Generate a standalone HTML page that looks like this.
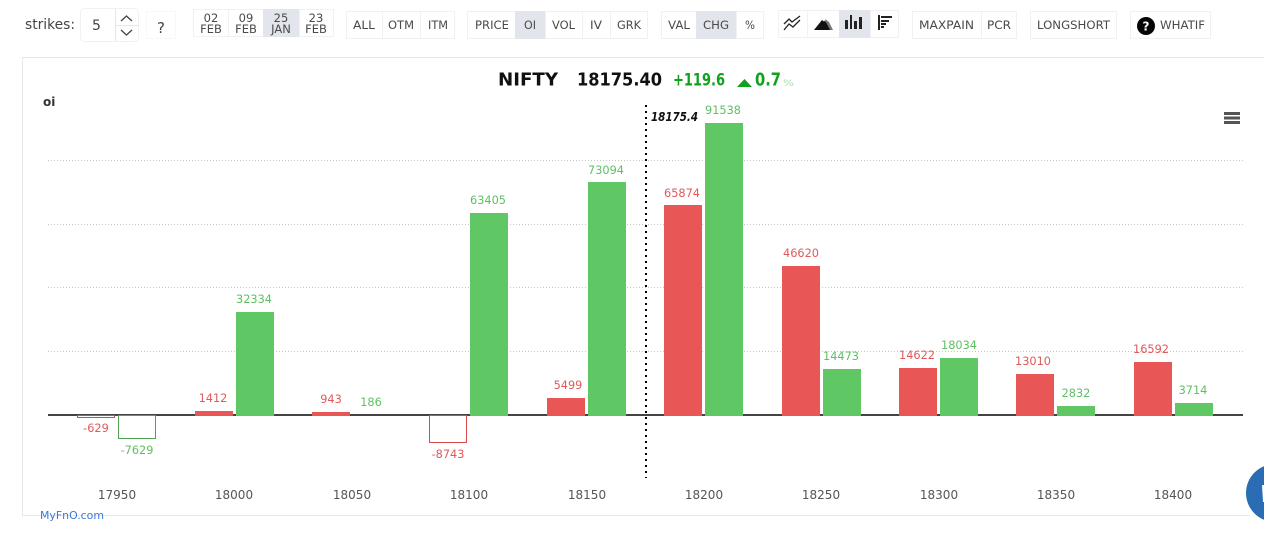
<!DOCTYPE html>
<html><head><meta charset="utf-8"><style>
html,body{margin:0;padding:0;background:#fff;width:1280px;height:537px;overflow:hidden}
svg{position:absolute;left:0;top:0;font-family:"DejaVu Sans","Liberation Sans",sans-serif}
</style></head><body>
<svg width="1264" height="537" viewBox="0 0 1264 537" xmlns="http://www.w3.org/2000/svg">
<rect x="0" y="0" width="1264" height="537" fill="#fff"/>
<!-- toolbar boxes -->
<g fill="#fff" stroke="#f0f1f4" stroke-width="1">
<rect x="80.5" y="8.5" width="58" height="33" rx="4"/>
<rect x="146.5" y="11.5" width="29" height="27" stroke-dasharray="1 1"/>
<rect x="193.5" y="9.5" width="35" height="27"/>
<rect x="228.5" y="9.5" width="35" height="27"/>
<rect x="299.5" y="9.5" width="34" height="27"/>
<rect x="346.5" y="11.5" width="36" height="27"/>
<rect x="382.5" y="11.5" width="38" height="27"/>
<rect x="420.5" y="11.5" width="34" height="27"/>
<rect x="467.5" y="11.5" width="48" height="27"/>
<rect x="545.5" y="11.5" width="37" height="27"/>
<rect x="582.5" y="11.5" width="28" height="27"/>
<rect x="610.5" y="11.5" width="37" height="27"/>
<rect x="661.5" y="11.5" width="35" height="27"/>
<rect x="736.5" y="11.5" width="27" height="27"/>
<rect x="778.5" y="10.5" width="29" height="27"/>
<rect x="807.5" y="10.5" width="32" height="27"/>
<rect x="870.5" y="10.5" width="28" height="27"/>
<rect x="912.5" y="11.5" width="69" height="27"/>
<rect x="981.5" y="11.5" width="35" height="27"/>
<rect x="1030.5" y="11.5" width="86" height="27"/>
<rect x="1130.5" y="11.5" width="80" height="27"/>
</g>
<g fill="#e3e5ec">
<rect x="263" y="9" width="36" height="28"/>
<rect x="515" y="11" width="30" height="28"/>
<rect x="696" y="11" width="40" height="28"/>
<rect x="839" y="10" width="31" height="28"/>
</g>
<path d="M115.5 9V41M115 25.5H139" stroke="#e4e6ea" fill="none"/>
<path d="M121 21l5.500-5 5.500 5" stroke="#444" stroke-width="1.300" fill="none"/>
<path d="M121 30l5.500 5 5.500-5" stroke="#444" stroke-width="1.300" fill="none"/>
<!-- toolbar text -->
<g fill="#444" font-size="14">
<text x="25" y="29" textLength="50" lengthAdjust="spacingAndGlyphs">strikes:</text>
<text x="92" y="30" font-size="14">5</text>
<text x="157" y="33" font-size="15">?</text>
</g>
<g fill="#4a4a4a" font-size="11.500" text-anchor="middle">
<text x="211" y="22">02</text><text x="211" y="33">FEB</text>
<text x="246" y="22">09</text><text x="246" y="33">FEB</text>
<text x="281" y="22">25</text><text x="281" y="33">JAN</text>
<text x="316" y="22">23</text><text x="316" y="33">FEB</text>
</g>
<g fill="#4a4a4a" font-size="11.500">
<text x="353" y="29" textLength="22" lengthAdjust="spacingAndGlyphs">ALL</text>
<text x="388" y="29" textLength="26" lengthAdjust="spacingAndGlyphs">OTM</text>
<text x="428" y="29" textLength="20" lengthAdjust="spacingAndGlyphs">ITM</text>
<text x="475" y="29" textLength="34" lengthAdjust="spacingAndGlyphs">PRICE</text>
<text x="524" y="29" textLength="12" lengthAdjust="spacingAndGlyphs">OI</text>
<text x="552" y="29" textLength="23" lengthAdjust="spacingAndGlyphs">VOL</text>
<text x="590" y="29" textLength="12" lengthAdjust="spacingAndGlyphs">IV</text>
<text x="617" y="29" textLength="24" lengthAdjust="spacingAndGlyphs">GRK</text>
<text x="668" y="29" textLength="22" lengthAdjust="spacingAndGlyphs">VAL</text>
<text x="703" y="29" textLength="26" lengthAdjust="spacingAndGlyphs">CHG</text>
<text x="745" y="29" textLength="10" lengthAdjust="spacingAndGlyphs">%</text>
<text x="919" y="29" textLength="55" lengthAdjust="spacingAndGlyphs">MAXPAIN</text>
<text x="987" y="29" textLength="24" lengthAdjust="spacingAndGlyphs">PCR</text>
<text x="1037" y="29" textLength="73" lengthAdjust="spacingAndGlyphs">LONGSHORT</text>
<text x="1160" y="29" textLength="45" lengthAdjust="spacingAndGlyphs">WHATIF</text>
</g>
<!-- help icon -->
<circle cx="1146" cy="26" r="9" fill="#050505"/>
<text x="1146" y="30.500" fill="#fff" font-size="12" font-weight="bold" text-anchor="middle">?</text>
<!-- chart-type icons -->
<g fill="none" stroke="#222" stroke-width="1.300">
<path d="M784 24l5-5 3 3 8-6"/>
<path d="M784 30l5-6 4 3 7-7"/>
</g>
<path d="M814 30l8-10 2 1.500 1-1 6 9.500z" fill="#111"/>
<path d="M825 19l4 3 4 8h-3l-4-8z" fill="#777"/>
<g fill="#222">
<rect x="845" y="20" width="3" height="9"/>
<rect x="850" y="15" width="2" height="14"/>
<rect x="854" y="21" width="3" height="8"/>
<rect x="859" y="17" width="3" height="12"/>
</g>
<g fill="#222">
<rect x="878" y="15" width="2" height="15"/>
<rect x="881" y="16" width="11" height="2"/>
<rect x="881" y="20" width="8" height="2"/>
<rect x="881" y="23" width="5" height="2"/>
<rect x="881" y="26" width="3" height="2"/>
</g>
<!-- chart frame -->
<path d="M1264 57.500H22.500V515.500H1250" fill="none" stroke="#e8e8e8"/>
<!-- grid -->
<g stroke="#c4c4c4" stroke-dasharray="1 2" stroke-width="1">
<path d="M48 160.500H1243M48 224.500H1243M48 287.500H1243M48 351.500H1243"/>
</g>
<rect x="48" y="414" width="1195" height="2" fill="#444"/>
<!-- bars -->
<g fill="#e85656">
<rect x="195" y="411" width="38" height="5"/>
<rect x="312" y="412" width="38" height="4"/>
<rect x="547" y="398" width="38" height="18"/>
<rect x="664" y="205" width="38" height="211"/>
<rect x="782" y="266" width="38" height="150"/>
<rect x="899" y="368" width="38" height="48"/>
<rect x="1016" y="374" width="38" height="42"/>
<rect x="1134" y="362" width="38" height="54"/>
</g>
<g fill="#5fc764">
<rect x="236" y="312" width="38" height="104"/>
<rect x="470" y="213" width="38" height="203"/>
<rect x="588" y="182" width="38" height="234"/>
<rect x="705" y="123" width="38" height="293"/>
<rect x="823" y="369" width="38" height="47"/>
<rect x="940" y="358" width="38" height="58"/>
<rect x="1057" y="406" width="38" height="10"/>
<rect x="1175" y="403" width="38" height="13"/>
</g>
<g fill="#fff">
<rect x="77.500" y="415.500" width="37" height="2" stroke="#d9474a"/>
<rect x="118.500" y="415.500" width="37" height="23" stroke="#4da552"/>
<rect x="429.500" y="415.500" width="37" height="27" stroke="#d9474a"/>
</g>
<!-- data labels -->
<g font-size="11.300" fill="#e05a5a" text-anchor="middle">
<text x="96" y="432">-629</text>
<text x="213" y="402">1412</text>
<text x="331" y="403">943</text>
<text x="448" y="458">-8743</text>
<text x="568" y="389">5499</text>
<text x="682" y="197">65874</text>
<text x="801" y="257">46620</text>
<text x="917" y="359">14622</text>
<text x="1033" y="365">13010</text>
<text x="1151" y="353">16592</text>
</g>
<g font-size="11.300" fill="#5fbf64" text-anchor="middle">
<text x="137" y="454">-7629</text>
<text x="254" y="303">32334</text>
<text x="371" y="406">186</text>
<text x="488" y="204">63405</text>
<text x="606" y="174">73094</text>
<text x="723" y="114">91538</text>
<text x="841" y="360">14473</text>
<text x="959" y="349">18034</text>
<text x="1076" y="397">2832</text>
<text x="1193" y="394">3714</text>
</g>
<!-- x axis -->
<g font-size="12" fill="#555" text-anchor="middle">
<text x="117" y="499">17950</text>
<text x="234" y="499">18000</text>
<text x="352" y="499">18050</text>
<text x="469" y="499">18100</text>
<text x="587" y="499">18150</text>
<text x="704" y="499">18200</text>
<text x="821" y="499">18250</text>
<text x="939" y="499">18300</text>
<text x="1056" y="499">18350</text>
<text x="1173" y="499">18400</text>
</g>
<!-- title -->
<g font-weight="bold" font-size="17">
<text x="498" y="85.500" fill="#111" font-size="18" textLength="60" lengthAdjust="spacingAndGlyphs">NIFTY</text>
<text x="577" y="85.500" fill="#111" font-size="18" textLength="85" lengthAdjust="spacingAndGlyphs">18175.40</text>
<text x="673" y="85.500" fill="#12a01f" textLength="52" lengthAdjust="spacingAndGlyphs">+119.6</text>
<text x="755" y="85.500" fill="#12a01f" font-size="18" textLength="26" lengthAdjust="spacingAndGlyphs">0.7</text>
</g>
<path d="M737 87l7.500-8 7.500 8z" fill="#12a01f"/>
<text x="783" y="86" font-size="9" fill="#a8dcae" textLength="11" lengthAdjust="spacingAndGlyphs">%</text>
<!-- y axis title -->
<text x="43" y="106" font-size="12" font-weight="bold" fill="#333">oi</text>
<!-- current price marker -->
<path d="M646 105V478" stroke="#000" stroke-width="2" stroke-dasharray="2 4"/>
<text x="651" y="121" font-size="12" font-weight="bold" font-style="italic" fill="#111" textLength="47" lengthAdjust="spacingAndGlyphs">18175.4</text>
<!-- menu -->
<g fill="#555">
<rect x="1224" y="112" width="16" height="3"/>
<rect x="1224" y="116.500" width="16" height="3"/>
<rect x="1224" y="121" width="16" height="3"/>
</g>
<!-- credit -->
<text x="40" y="519" font-size="10.500" fill="#3b78d4" textLength="64" lengthAdjust="spacingAndGlyphs">MyFnO.com</text>
<!-- chat bubble -->
<circle cx="1275" cy="493" r="29" fill="#2a6db5"/>
<path d="M1262 485H1264V502H1263z" fill="#fff"/>
</svg>
</body></html>
